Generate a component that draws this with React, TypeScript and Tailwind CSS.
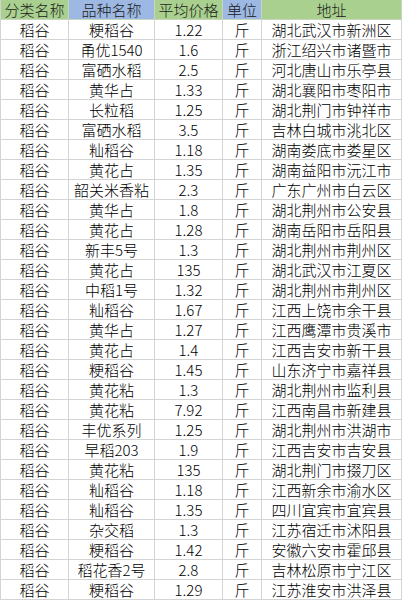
const rows: [string, string, string, string, string][] = [
  ["稻谷", "粳稻谷", "1.22", "斤", "湖北武汉市新洲区"],
  ["稻谷", "甬优1540", "1.6", "斤", "浙江绍兴市诸暨市"],
  ["稻谷", "富硒水稻", "2.5", "斤", "河北唐山市乐亭县"],
  ["稻谷", "黄华占", "1.33", "斤", "湖北襄阳市枣阳市"],
  ["稻谷", "长粒稻", "1.25", "斤", "湖北荆门市钟祥市"],
  ["稻谷", "富硒水稻", "3.5", "斤", "吉林白城市洮北区"],
  ["稻谷", "籼稻谷", "1.18", "斤", "湖南娄底市娄星区"],
  ["稻谷", "黄花占", "1.35", "斤", "湖南益阳市沅江市"],
  ["稻谷", "韶关米香粘", "2.3", "斤", "广东广州市白云区"],
  ["稻谷", "黄华占", "1.8", "斤", "湖北荆州市公安县"],
  ["稻谷", "黄花占", "1.28", "斤", "湖南岳阳市岳阳县"],
  ["稻谷", "新丰5号", "1.3", "斤", "湖北荆州市荆州区"],
  ["稻谷", "黄花占", "135", "斤", "湖北武汉市江夏区"],
  ["稻谷", "中稻1号", "1.32", "斤", "湖北荆州市荆州区"],
  ["稻谷", "籼稻谷", "1.67", "斤", "江西上饶市余干县"],
  ["稻谷", "黄华占", "1.27", "斤", "江西鹰潭市贵溪市"],
  ["稻谷", "黄花占", "1.4", "斤", "江西吉安市新干县"],
  ["稻谷", "粳稻谷", "1.45", "斤", "山东济宁市嘉祥县"],
  ["稻谷", "黄花粘", "1.3", "斤", "湖北荆州市监利县"],
  ["稻谷", "黄花粘", "7.92", "斤", "江西南昌市新建县"],
  ["稻谷", "丰优系列", "1.25", "斤", "湖北荆州市洪湖市"],
  ["稻谷", "早稻203", "1.9", "斤", "江西吉安市吉安县"],
  ["稻谷", "黄花粘", "135", "斤", "湖北荆门市掇刀区"],
  ["稻谷", "籼稻谷", "1.18", "斤", "江西新余市渝水区"],
  ["稻谷", "籼稻谷", "1.35", "斤", "四川宜宾市宜宾县"],
  ["稻谷", "杂交稻", "1.3", "斤", "江苏宿迁市沭阳县"],
  ["稻谷", "粳稻谷", "1.42", "斤", "安徽六安市霍邱县"],
  ["稻谷", "稻花香2号", "2.8", "斤", "吉林松原市宁江区"],
  ["稻谷", "粳稻谷", "1.29", "斤", "江苏淮安市洪泽县"],
]

const headers = [
  { label: "分类名称", bg: "bg-[#a9d08e]" },
  { label: "品种名称", bg: "bg-[#9db8e2]" },
  { label: "平均价格", bg: "bg-[#a9d08e]" },
  { label: "单位", bg: "bg-[#9db8e2]" },
  { label: "地址", bg: "bg-[#a9d08e]" },
]

export default function App() {
  return (
    <div
      className="w-[402px] h-[603px] bg-white text-black overflow-hidden"
      style={{ fontFamily: '"Noto Sans CJK SC", "Noto Sans", sans-serif' }}
    >
      <div className="grid w-[401px] grid-cols-[68px_86px_68px_39px_140px] border-l border-[#d4d4d4] text-[15px] leading-[19px] font-light">
        {headers.map((h) => (
          <div
            key={h.label}
            className={`${h.bg} h-5 border-r border-b border-[#c8d6c0] text-center text-[#1a1a1a]`}
          >
            {h.label}
          </div>
        ))}
        {rows.map((r, i) =>
          r.map((cell, j) => (
            <div
              key={`${i}-${j}`}
              className="h-5 border-r border-b border-[#d4d4d4] text-center whitespace-nowrap"
            >
              {cell}
            </div>
          )),
        )}
      </div>
    </div>
  )
}
